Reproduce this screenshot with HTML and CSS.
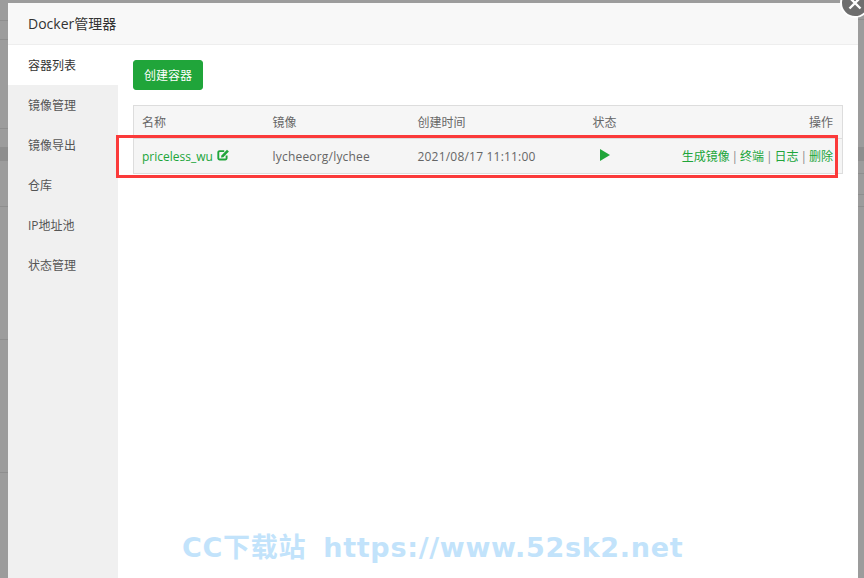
FILE: index.html
```html
<!DOCTYPE html>
<html lang="zh-CN">

<head>
    <meta charset="UTF-8">
    <meta name="viewport" content="width=device-width, initial-scale=1.0">
    <title>Docker管理器</title>
    <link rel="stylesheet" href="styles.css">
</head>

<body>
    <div class="modal">
        <div class="modal-title">Docker管理器</div>
        <div class="modal-body">
            <ul class="side-menu">
                <li class="active">容器列表</li>
                <li>镜像管理</li>
                <li>镜像导出</li>
                <li>仓库</li>
                <li>IP地址池</li>
                <li>状态管理</li>
            </ul>
            <div class="content">
                <button class="btn-create">创建容器</button>
                <table class="data-table">
                    <thead>
                        <tr>
                            <th class="col-name">名称</th>
                            <th class="col-image">镜像</th>
                            <th class="col-time">创建时间</th>
                            <th class="col-status">状态</th>
                            <th class="col-ops">操作</th>
                        </tr>
                    </thead>
                    <tbody>
                        <tr>
                            <td><a class="link name-link">priceless_wu</a>
                                <svg class="edit-icon" viewBox="0 0 13 12" width="13" height="12">
                                    <path d="M9.6 6.6v2.6a1.3 1.3 0 0 1-1.3 1.3H2.6a1.3 1.3 0 0 1-1.3-1.3V3.4a1.3 1.3 0 0 1 1.3-1.3h4.6" fill="none" stroke="#20a53a" stroke-width="1.9"/>
                                    <path d="M4.4 6.4 10 .7l1.9 1.9-5.6 5.6-2.3.4z" fill="#20a53a"/>
                                </svg>
                            </td>
                            <td class="wide-text">lycheeorg/lychee</td>
                            <td class="wide-text">2021/08/17 11:11:00</td>
                            <td class="status-cell"><span class="play-icon"></span></td>
                            <td class="ops-cell">
                                <a class="link">生成镜像</a> | <a class="link">终端</a> | <a class="link">日志</a> | <a class="link">删除</a>
                            </td>
                        </tr>
                    </tbody>
                </table>
            </div>
        </div>
        <span class="close-btn">
            <svg viewBox="0 0 14 14" width="14" height="14">
                <path d="M1.5 1.5l11 11M12.5 1.5l-11 11" stroke="#fff" stroke-width="2.4" fill="none"/>
            </svg>
        </span>
    </div>

    <!-- 标注框和水印 -->
    <div class="red-box"></div>
    <div class="watermark">CC下载站 https://www.52sk2.net</div>
</body>

</html>
```

FILE: styles.css
```css
* {
    box-sizing: border-box;
}

html,
body {
    margin: 0;
    height: 578px;
    overflow: hidden;
}

body {
    position: relative;
    padding: 3px 0 0 8px;
    font-family: "Open Sans", "Noto Sans CJK SC", sans-serif;
    font-size: 12px;
    color: #555;
    /* 遮罩后面页面的线条，左右两条分开画 */
    --line: linear-gradient(#8e8e8e, #8e8e8e);
    background-color: #9c9c9c;
    background-image:
        var(--line), var(--line), var(--line), var(--line), var(--line), var(--line), var(--line),
        var(--line), var(--line), var(--line), var(--line), var(--line);
    background-repeat: no-repeat;
    background-size:
        8px 1px, 8px 1px, 8px 1px, 8px 14px, 8px 1px, 8px 1px, 8px 1px,
        6px 1px, 6px 14px, 6px 1px, 6px 1px, 6px 1px;
    background-position:
        0 20px, 0 39px, 0 128px, 0 147px, 0 206px, 0 339px, 0 472px,
        100% 19px, 100% 147px, 100% 173px, 100% 194px, 100% 206px;
}

.modal {
    position: relative;
    width: 850px;
    height: 575px;
    background: #fff;
}

.modal-title {
    height: 42px;
    padding: 0 20px;
    line-height: 41px;
    font-size: 14px;
    color: #333;
    background: #f8f8f8;
    border-bottom: 1px solid #eee;
}

.modal-body {
    display: flex;
    height: 533px;
}

.side-menu {
    width: 110px;
    margin: 0;
    padding: 0;
    list-style: none;
    background: #f0f0f0;
}

.side-menu li {
    height: 40px;
    padding: 1px 0 0 20px;
    line-height: 40px;
    color: #555;
}

.side-menu .active {
    background: #fff;
    color: #333;
}

.content {
    flex: 1;
    padding: 15px 15px 0;
}

.btn-create {
    display: block;
    width: 70px;
    height: 30px;
    padding: 0;
    border: 1px solid #20a53a;
    border-radius: 3px;
    background: #20a53a;
    color: #fff;
    font: inherit;
}

.data-table {
    width: 710px;
    margin-top: 15px;
    table-layout: fixed;
    border-collapse: collapse;
    border: 1px solid #ddd;
}

.data-table th,
.data-table td {
    padding: 0 8px;
    text-align: left;
    font-weight: normal;
    white-space: nowrap;
}

.data-table th {
    height: 33px;
    background: #f6f6f6;
    color: #666;
}

.data-table td {
    height: 35px;
    background: #f5f5f5;
    border-top: 1px solid #ddd;
    color: #666;
}

.data-table .wide-text {
    letter-spacing: 0.2px;
}

.col-name {
    width: 131px;
}

.col-image {
    width: 145px;
}

.col-time {
    width: 175px;
}

.col-status {
    width: 70px;
}

.data-table .col-ops,
.data-table .ops-cell {
    text-align: right;
    padding-right: 9px;
}

.data-table .ops-cell {
    color: #888;
    word-spacing: -1.2px;
}

.link {
    color: #20a53a;
}

.edit-icon {
    margin-left: 1px;
    vertical-align: 0;
}

.play-icon {
    display: block;
    width: 0;
    height: 0;
    margin: -2px 0 0 7px;
    border-left: 10px solid #20a53a;
    border-top: 6px solid transparent;
    border-bottom: 6px solid transparent;
}

.close-btn {
    position: absolute;
    top: -15px;
    right: -12px;
    display: flex;
    align-items: center;
    justify-content: center;
    width: 30px;
    height: 30px;
    border: 2px solid #fff;
    border-radius: 50%;
    background: #6e6e6e;
}

.red-box {
    position: absolute;
    left: 116px;
    top: 135px;
    width: 722px;
    height: 43px;
    border: 3px solid #fb3a3a;
}

.watermark {
    position: absolute;
    left: 182px;
    top: 530px;
    font-family: "DejaVu Sans", "Noto Sans CJK SC", sans-serif;
    font-size: 27px;
    font-weight: bold;
    line-height: 36px;
    letter-spacing: 0.7px;
    word-spacing: 7px;
    white-space: nowrap;
    color: #c2e3fb;
}
```
